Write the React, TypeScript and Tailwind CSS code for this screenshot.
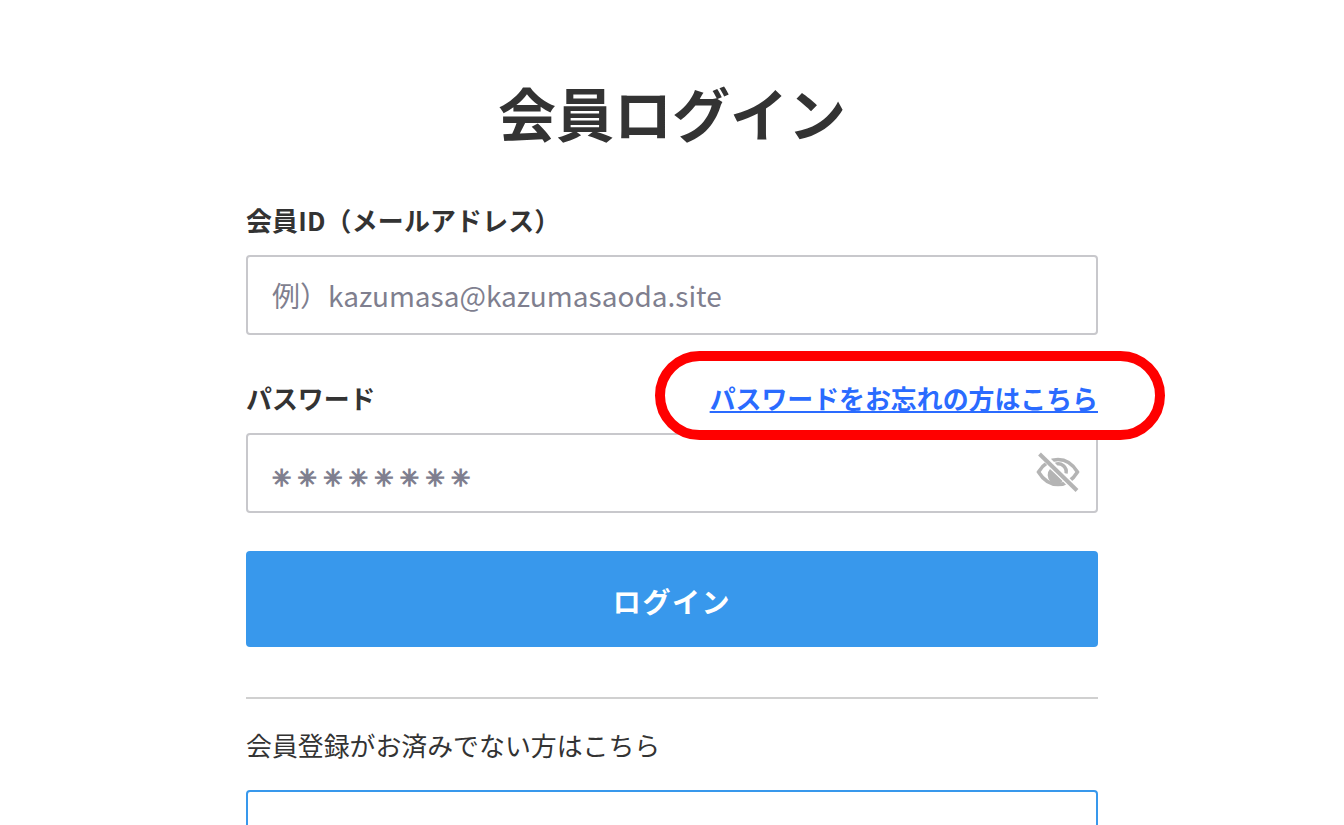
const jp = "font-['Noto_Sans_CJK_JP','Noto_Sans',sans-serif]";

function EyeOffIcon() {
  return (
    <svg viewBox="0 0 44 40" className="w-[44px] h-[40px] -mt-[2px]" fill="none" stroke="#b4b4b4">
      <path d="M2.5 20 C8 11 14 7.5 22 7.5 C30 7.5 36 11 41.5 20 C36 29 30 32.5 22 32.5 C14 32.5 8 29 2.5 20 Z" strokeWidth="3.5" />
      <path d="M14 17 a8.5 8.5 0 0 0 13 12 Z" fill="#b4b4b4" stroke="none" />
      <path d="M19 12.5 a8 8 0 0 1 11 9" strokeWidth="3.5" />
      <path d="M5 1.5 L40 38" stroke="#ffffff" strokeWidth="7" />
      <path d="M3.5 2 L41 38.5" strokeWidth="4" />
    </svg>
  );
}

export default function App() {
  return (
    <div className={`relative h-[825px] overflow-hidden bg-white text-[#333333] ${jp}`}>
      <div className="w-[852px] mx-auto pt-[70px]">
        <h1 className="text-center text-[58px] leading-[84px] font-bold">会員ログイン</h1>

        <label className="block mt-[48px] text-[25.9px] leading-[36px] font-bold tracking-[0.2px]">会員ID（メールアドレス）</label>
        <div className="mt-[17px] h-[80px] flex items-center px-[24px] border-2 border-[#c8c8cc] rounded-[4px] text-[28px] text-[#7f7f8f]">
          例）kazumasa@kazumasaoda.site
        </div>

        <div className="mt-[45px] flex items-center justify-between">
          <label className="text-[25.9px] leading-[36px] font-bold">パスワード</label>
          <a className="text-[25.9px] leading-[36px] font-bold text-[#2a6bff] underline">パスワードをお忘れの方はこちら</a>
        </div>
        <div className="mt-[17px] h-[80px] flex items-center justify-between pl-[24px] pr-[16px] border-2 border-[#c8c8cc] rounded-[4px] text-[#7f7f8f]">
          <span className="font-['DejaVu_Sans',sans-serif] text-[23px] leading-none font-bold tracking-[6.3px] mt-[10px] [-webkit-text-stroke:1.3px_#7f7f8f]">✳✳✳✳✳✳✳✳</span>
          <EyeOffIcon />
        </div>

        <button className="mt-[38px] w-full h-[96px] pt-[3px] rounded-[4px] bg-[#3898ec] text-white text-[28px] font-bold tracking-[1.6px]">ログイン</button>

        <div className="mt-[50px] h-[2px] bg-[#d0d0d0]" />

        <p className="mt-[28px] text-[25.9px] leading-[36px]">会員登録がお済みでない方はこちら</p>
        <div className="mt-[27px] h-[100px] border-2 border-[#3898ec] rounded-[4px]" />
      </div>

      {/* red highlight */}
      <div className="absolute left-[655px] top-[351px] w-[510px] h-[89px] rounded-[45px] border-[10px] border-[#ff0000]" />
    </div>
  );
}
